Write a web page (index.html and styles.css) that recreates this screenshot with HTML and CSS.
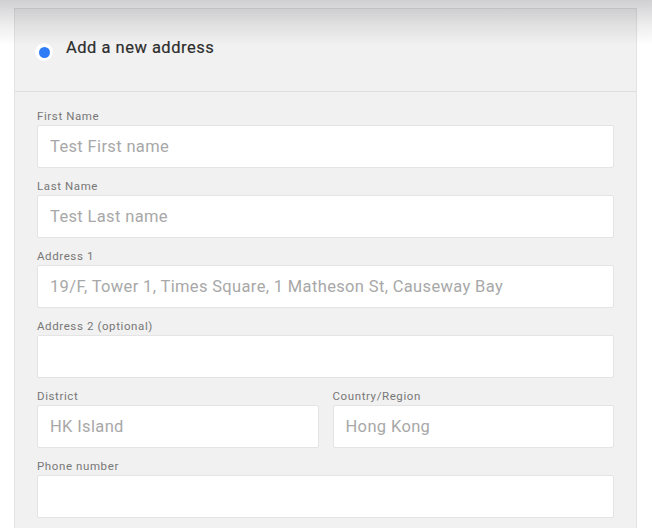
FILE: index.html
```html
<!DOCTYPE html>
<html lang="en">
<head>
    <meta charset="UTF-8">
    <meta name="viewport" content="width=device-width, initial-scale=1.0">
    <title>Add a new address</title>
    <link rel="stylesheet" href="styles.css">
</head>
<body>
    <div class="top-shade"></div>
    <div class="panel">
        <div class="panel-head">
            <span class="radio"><span class="radio-dot"></span></span>
            <span class="head-text">Add a new address</span>
        </div>
        <form class="address-form">
            <div class="field">
                <label>First Name</label>
                <input type="text" placeholder="Test First name">
            </div>
            <div class="field">
                <label>Last Name</label>
                <input type="text" placeholder="Test Last name">
            </div>
            <div class="field">
                <label>Address 1</label>
                <input type="text" placeholder="19/F, Tower 1, Times Square, 1 Matheson St, Causeway Bay">
            </div>
            <div class="field">
                <label>Address 2 (optional)</label>
                <input type="text">
            </div>
            <div class="field-row">
                <div class="field">
                    <label>District</label>
                    <input type="text" placeholder="HK Island">
                </div>
                <div class="field">
                    <label>Country/Region</label>
                    <input type="text" placeholder="Hong Kong">
                </div>
            </div>
            <div class="field">
                <label>Phone number</label>
                <input type="text">
            </div>
        </form>
    </div>
</body>
</html>
```
FILE: styles.css
```css
body {
    margin: 0;
    background: #ffffff;
    font-family: Roboto, "Liberation Sans", Arial, sans-serif;
    color: #333333;
    overflow: hidden;
}
.top-shade {
    position: fixed;
    top: 0;
    left: 0;
    right: 0;
    height: 46px;
    background: linear-gradient(to bottom, rgba(40, 40, 50, 0.22), rgba(40, 40, 50, 0.08) 55%, rgba(40, 40, 50, 0));
    pointer-events: none;
    z-index: 2;
}
.panel {
    margin: 8px 0 0 14px;
    width: 621px;
    background: #f1f1f1;
    border: 1px solid #e3e3e3;
    border-bottom: none;
    height: 560px;
}
.panel-head {
    display: flex;
    align-items: center;
    height: 83px;
    padding-left: 20px;
    border-bottom: 1px solid #dedede;
    box-sizing: border-box;
    padding-bottom: 1px;
}
.radio {
    width: 18px;
    height: 18px;
    border-radius: 50%;
    background: #ffffff;
    display: flex;
    align-items: center;
    justify-content: center;
    margin-right: 13px;
    margin-top: 5px;
}
.radio-dot {
    width: 11px;
    height: 11px;
    border-radius: 50%;
    background: #2f7cf6;
}
.head-text {
    font-size: 16.5px;
    letter-spacing: 0.5px;
    color: #2e2e2e;
    margin-bottom: 4px;
    -webkit-text-stroke: 0.2px #2e2e2e;
}
.address-form {
    padding: 17px 22px 0 22px;
}
.field {
    display: flex;
    flex-direction: column;
    margin-bottom: 11px;
}
.field label {
    font-size: 11.5px;
    letter-spacing: 0.6px;
    line-height: 14px;
    color: #777777;
    margin-bottom: 2px;
}
.field input {
    height: 43px;
    box-sizing: border-box;
    border: 1px solid #e4e4e4;
    border-radius: 2px;
    background: #ffffff;
    padding: 0 12px;
    font-family: Roboto, "Liberation Sans", Arial, sans-serif;
    font-size: 16.5px;
    letter-spacing: 0.35px;
    color: #333333;
    outline: none;
}
.field input::placeholder {
    color: #a8a8a8;
}
.field-row {
    display: grid;
    grid-template-columns: 1fr 1fr;
    column-gap: 14px;
}
```
